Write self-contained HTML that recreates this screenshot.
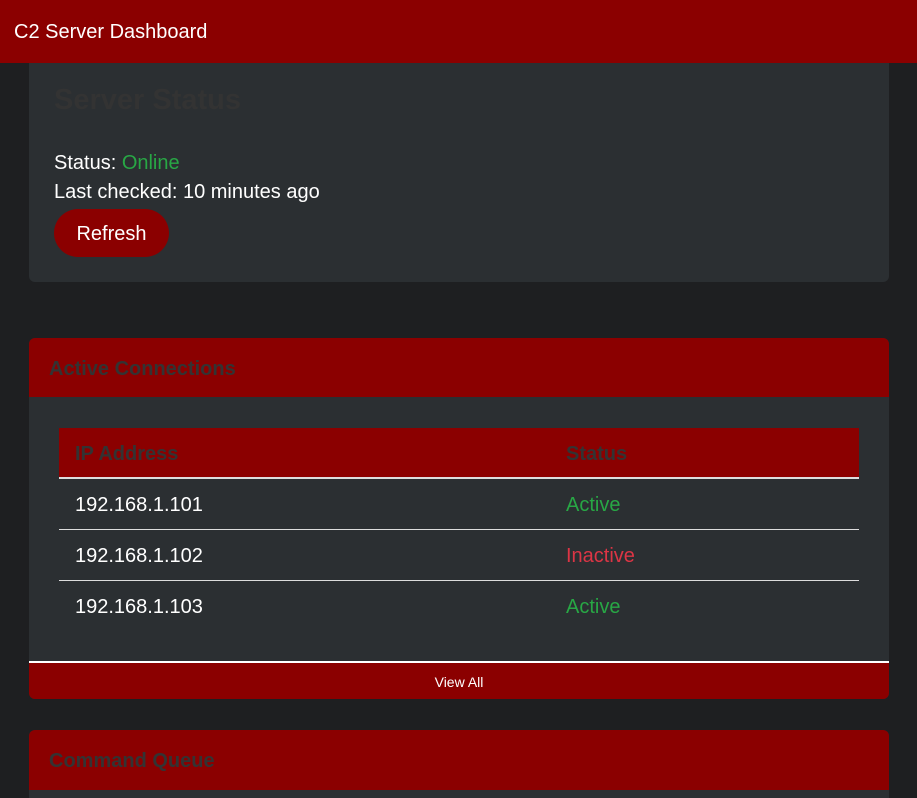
<!DOCTYPE html>
<html><head><style>
html,body{margin:0;height:798px;overflow:hidden}
body{background:#1e1f21;font-family:"Liberation Sans",sans-serif;width:917px;position:relative}
.hdr{position:absolute;left:0;top:0;width:917px;height:63px;background:#8b0000;color:#fff;font-size:20px;line-height:64px;padding-left:14px;box-sizing:border-box}
.card{position:absolute;left:29px;width:860px;background:#2b2f32;border-radius:6px;overflow:hidden}
.t1{position:absolute;left:25px;top:21px;font-size:29px;font-weight:bold;color:#333}
.p{position:absolute;left:25px;font-size:20px;color:#fff}
.btn{position:absolute;left:25px;top:146px;width:115px;height:48px;border-radius:24px;background:#8b0000;color:#fff;font-size:20px;text-align:center;line-height:51px}
.ch{position:absolute;left:0;top:0;width:860px;height:59px;background:#8b0000;color:#333;font-weight:bold;font-size:20px;line-height:62px;padding-left:20px;box-sizing:border-box}
.row{position:absolute;left:30px;width:800px;height:50px;font-size:20px;color:#fff;line-height:52px;border-bottom:1px solid #ddd}
.row span{position:absolute;left:16px}.row b{position:absolute;left:507px;font-weight:normal}
</style></head><body>
<div class="hdr">C2 Server Dashboard</div>
<div class="card" style="top:63px;height:219px;border-radius:0 0 6px 6px">
<div class="t1">Server Status</div>
<div class="p" style="top:89px">Status: <span style="color:#28a745">Online</span></div>
<div class="p" style="top:118px">Last checked: 10 minutes ago</div>
<div class="btn">Refresh</div>
</div>
<div class="card" style="top:338px;height:361px">
<div class="ch">Active Connections</div>
<div class="row" style="top:90px;background:#8b0000;color:#333;font-weight:bold;border-bottom:2px solid #ddd;height:49px"><span>IP Address</span><b style="font-weight:bold">Status</b></div>
<div class="row" style="top:141px"><span>192.168.1.101</span><b style="color:#28a745">Active</b></div>
<div class="row" style="top:192px"><span>192.168.1.102</span><b style="color:#dc3545">Inactive</b></div>
<div class="row" style="top:243px;border-bottom:none"><span>192.168.1.103</span><b style="color:#28a745">Active</b></div>
<div style="position:absolute;left:0;top:323px;width:860px;height:2px;background:#fff"></div>
<div style="position:absolute;left:0;top:325px;width:860px;height:36px;background:#8b0000;color:#fff;font-size:14px;text-align:center;line-height:38px">View All</div>
</div>
<div class="card" style="top:730px;height:68px;border-radius:6px 6px 0 0">
<div class="ch" style="height:60px">Command Queue</div>
</div>
</body></html>
